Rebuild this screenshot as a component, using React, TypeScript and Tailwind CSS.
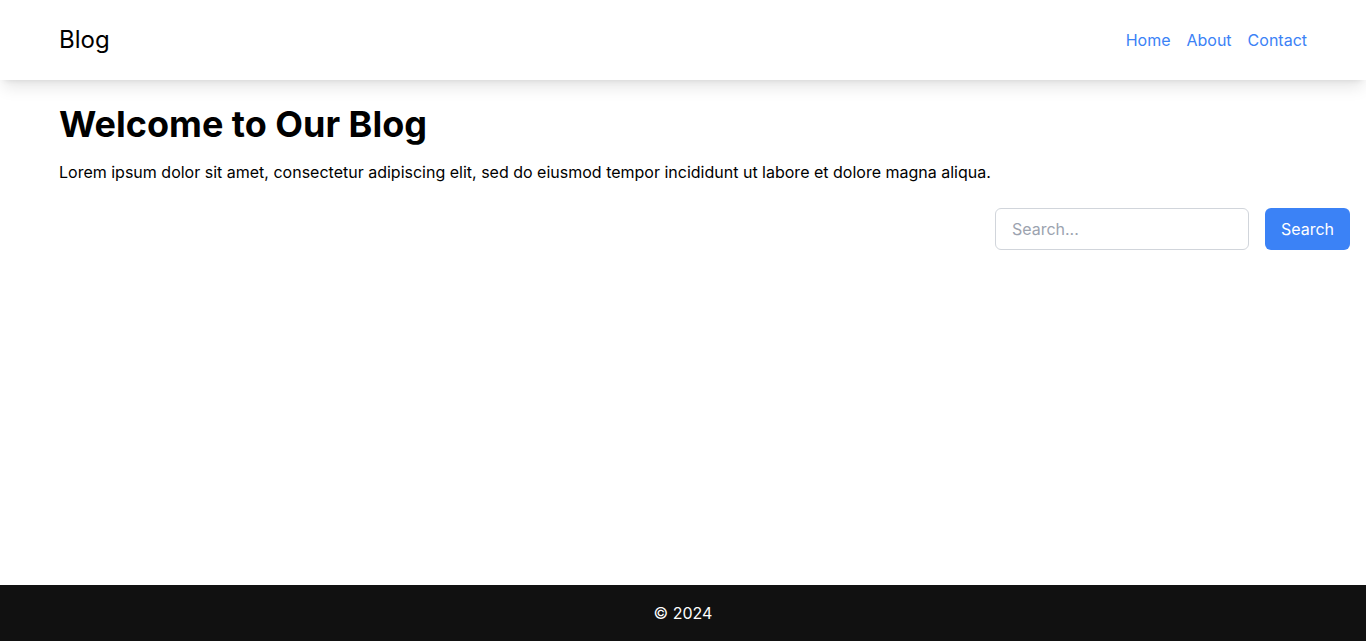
export default function App() {
  return (
    <div className="min-h-screen flex flex-col bg-white text-black font-['Inter',sans-serif]">
      {/* header */}
      <header className="relative z-10 bg-white shadow-lg">
        <div className="flex items-center justify-between h-20 px-[59px]">
          <a href="#" className="text-2xl">Blog</a>
          <nav className="flex gap-4 text-[#3b82f6]">
            <a href="#">Home</a>
            <a href="#">About</a>
            <a href="#">Contact</a>
          </nav>
        </div>
      </header>

      <main className="flex-1 pt-6">
        <div className="px-[59px]">
          <h1 className="text-4xl font-bold">Welcome to Our Blog</h1>
          <p className="mt-4">
            Lorem ipsum dolor sit amet, consectetur adipiscing elit, sed do eiusmod tempor incididunt ut labore et dolore magna aliqua.
          </p>
        </div>
        <div className="flex justify-end gap-4 px-4 mt-6">
          <input
            type="text"
            placeholder="Search..."
            className="w-[254px] px-4 py-2 border border-[#d1d5db] rounded-md placeholder:text-[#9ca3af] outline-none"
          />
          <button type="button" className="px-4 py-2 bg-[#3b82f6] text-white rounded-md">
            Search
          </button>
        </div>
      </main>

      <footer className="bg-[#111111] text-white text-center py-4">
        © 2024
      </footer>
    </div>
  );
}
